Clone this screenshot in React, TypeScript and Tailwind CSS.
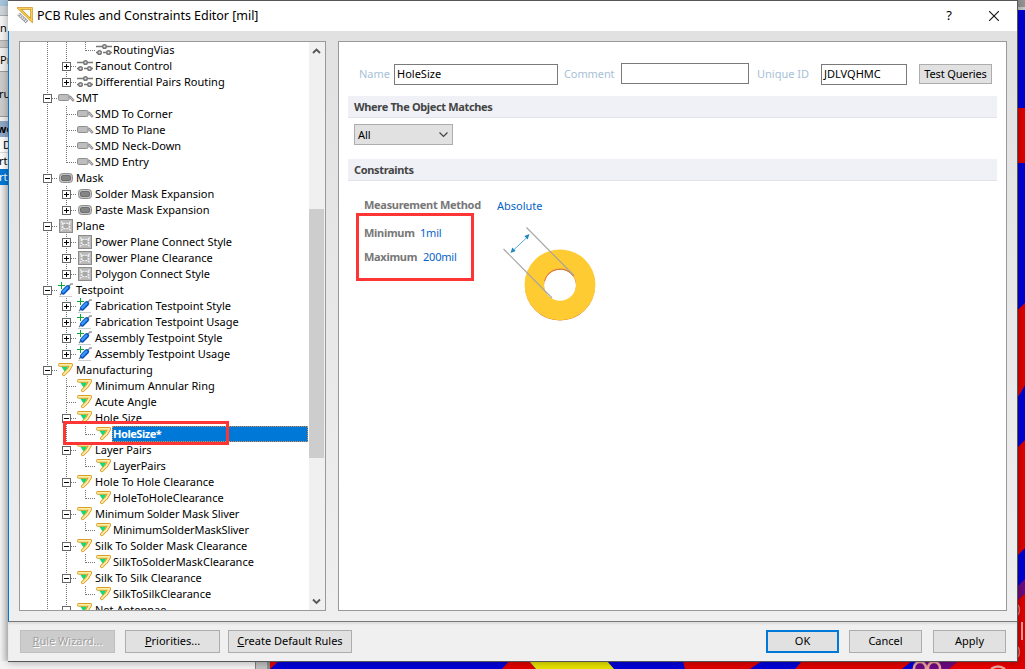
import React from 'react'
import clsx from 'clsx'

type IconName = 'routing' | 'smt' | 'mask' | 'plane' | 'testpoint' | 'manufacturing'

type TreeRow = {
    label: string
    level: number
    icon: IconName
    box?: '+' | '-'
    last?: boolean
    selected?: boolean
    tight?: boolean
}

const rows: TreeRow[] = [
    { label: 'RoutingVias', level: 2, icon: 'routing' },
    { label: 'Fanout Control', level: 1, icon: 'routing', box: '+' },
    { label: 'Differential Pairs Routing', level: 1, icon: 'routing', box: '+', last: true },
    { label: 'SMT', level: 0, icon: 'smt', box: '-' },
    { label: 'SMD To Corner', level: 1, icon: 'smt' },
    { label: 'SMD To Plane', level: 1, icon: 'smt' },
    { label: 'SMD Neck-Down', level: 1, icon: 'smt' },
    { label: 'SMD Entry', level: 1, icon: 'smt', last: true },
    { label: 'Mask', level: 0, icon: 'mask', box: '-' },
    { label: 'Solder Mask Expansion', level: 1, icon: 'mask', box: '+' },
    { label: 'Paste Mask Expansion', level: 1, icon: 'mask', box: '+', last: true },
    { label: 'Plane', level: 0, icon: 'plane', box: '-' },
    { label: 'Power Plane Connect Style', level: 1, icon: 'plane', box: '+' },
    { label: 'Power Plane Clearance', level: 1, icon: 'plane', box: '+' },
    { label: 'Polygon Connect Style', level: 1, icon: 'plane', box: '+', last: true },
    { label: 'Testpoint', level: 0, icon: 'testpoint', box: '-' },
    { label: 'Fabrication Testpoint Style', level: 1, icon: 'testpoint', box: '+' },
    { label: 'Fabrication Testpoint Usage', level: 1, icon: 'testpoint', box: '+' },
    { label: 'Assembly Testpoint Style', level: 1, icon: 'testpoint', box: '+' },
    { label: 'Assembly Testpoint Usage', level: 1, icon: 'testpoint', box: '+', last: true },
    { label: 'Manufacturing', level: 0, icon: 'manufacturing', box: '-' },
    { label: 'Minimum Annular Ring', level: 1, icon: 'manufacturing' },
    { label: 'Acute Angle', level: 1, icon: 'manufacturing' },
    { label: 'Hole Size', level: 1, icon: 'manufacturing', box: '-' },
    { label: 'HoleSize*', level: 2, icon: 'manufacturing', selected: true },
    { label: 'Layer Pairs', level: 1, icon: 'manufacturing', box: '-' },
    { label: 'LayerPairs', level: 2, icon: 'manufacturing', tight: true },
    { label: 'Hole To Hole Clearance', level: 1, icon: 'manufacturing', box: '-' },
    { label: 'HoleToHoleClearance', level: 2, icon: 'manufacturing' },
    { label: 'Minimum Solder Mask Sliver', level: 1, icon: 'manufacturing', box: '-', tight: true },
    { label: 'MinimumSolderMaskSliver', level: 2, icon: 'manufacturing', tight: true },
    { label: 'Silk To Solder Mask Clearance', level: 1, icon: 'manufacturing', box: '-' },
    { label: 'SilkToSolderMaskClearance', level: 2, icon: 'manufacturing' },
    { label: 'Silk To Silk Clearance', level: 1, icon: 'manufacturing', box: '-' },
    { label: 'SilkToSilkClearance', level: 2, icon: 'manufacturing' },
    { label: 'Net Antennae', level: 1, icon: 'manufacturing', box: '-' },
]

const TreeIcon = ({ name }: { name: IconName }) => (
    <svg width="19" height="16" viewBox="0 0 19 16" className="shrink-0">
        {name === 'routing' && (
            <g fill="none" stroke="#777" strokeWidth="1.3">
                <path d="M1 4.5h6M12 4.5h5M1 10.5h3M8 10.5h3M15 10.5h2" />
                <g fill="#ddd" strokeWidth="1.5">
                    <circle cx="9.5" cy="4.5" r="1.8" />
                    <circle cx="4.5" cy="10.5" r="1.8" />
                    <circle cx="13.5" cy="10.5" r="1.8" />
                </g>
            </g>
        )}
        {name === 'smt' && (
            <g>
                <path d="M11 7h2.200l3.500 4" fill="none" stroke="#8c8c8c" strokeWidth="2.6" />
                <path d="M11 7h2.200l3 3.500" fill="none" stroke="#c8c8c8" strokeWidth="1" />
                <rect x="1.5" y="4.5" width="10.5" height="6" rx="1.3" fill="#bdbdbd" stroke="#8f8f8f" />
            </g>
        )}
        {name === 'mask' && (
            <g>
                <rect x="2.5" y="3.5" width="13" height="9" rx="3" fill="#c3c3c3" stroke="#8f8f8f" />
                <rect x="4.5" y="5.5" width="9" height="5" rx="1.5" fill="#858585" stroke="#707070" />
            </g>
        )}
        {name === 'plane' && (
            <g>
                <rect x="2.5" y="1.5" width="13" height="13" fill="#b9b9b9" stroke="#8c8c8c" />
                <path d="M4 3.5l2.5 2h5l2.5-2M4 12.5l2.5-2h5l2.5 2M5.5 5v6M12.5 5v6" fill="none" stroke="#eee" strokeWidth="1.4" strokeDasharray="2 1" />
                <rect x="7" y="6" width="4" height="4" fill="#a8a8a8" />
            </g>
        )}
        {name === 'testpoint' && (
            <g>
                <path d="M2 14.5h13" stroke="#ccc" />
                <path d="M11.5 4.500l2.500-2.500h2" fill="none" stroke="#999" strokeWidth="1.6" />
                <path d="M3 13l3-3" stroke="#777" strokeWidth="1.2" />
                <path d="M6.3 10.200L10.800 5.500" stroke="#0b55c0" strokeWidth="4.8" strokeLinecap="round" />
                <path d="M6.300 9.700L10.300 5.500" stroke="#3c97fa" strokeWidth="2.4" strokeLinecap="round" />
                <path d="M1 3.5h7M4.5 0v7" stroke="#0ba538" shapeRendering="crispEdges" />
            </g>
        )}
        {name === 'manufacturing' && (
            <g strokeLinecap="round" strokeLinejoin="round">
                <path d="M4.200 4.500h7L8 10z" fill="#10dc72" />
                <path d="M2.900 2.900h11.400L11.300 8 6.800 12.300" fill="none" stroke="#d99c25" strokeWidth="3.600" />
                <path d="M2.900 2.900h11.400L11.300 8 6.800 12.300" fill="none" stroke="#ffefa8" strokeWidth="1.800" />
            </g>
        )}
    </svg>
)

// one 19px column of the tree: dotted guide lines plus the expand box
const Guide = ({ up, down, right, box }: { up?: boolean, down?: boolean, right?: boolean, box?: '+' | '-' }) => (
    <svg width="19" height="16" viewBox="0 0 19 16" shapeRendering="crispEdges" className="shrink-0">
        <g stroke="#777" strokeDasharray="1 1">
            {up && <path d="M9.5 0v9" />}
            {down && <path d="M9.5 8v8" />}
            {right && <path d="M10 8.5h9" />}
        </g>
        {box && (
            <g stroke="#666">
                <rect x="5.5" y="4.5" width="8" height="8" fill="#fff" />
                <path d="M7 8.5h5" stroke="#000" />
                {box === '+' && <path d="M9.5 6v5" stroke="#000" />}
            </g>
        )}
    </svg>
)

const Row = ({ row }: { row: TreeRow }) => (
    <div className="flex h-4 shrink-0 items-center pl-[18px]">
        <Guide up down right={row.level === 0} box={row.level === 0 ? row.box : undefined} />
        {row.level > 0 && <Guide up down={row.level === 2 || !row.last} right={row.level === 1} box={row.level === 1 ? row.box : undefined} />}
        {row.level > 1 && <Guide up right />}
        <TreeIcon name={row.icon} />
        {row.selected ? (
            <div className="-ml-[2px] flex h-4 flex-1 items-center border border-dotted border-[#e09040] bg-[#0078d7] font-bold leading-4 tracking-[-0.45px] text-white">
                {row.label}
            </div>
        ) : (
            <div className={clsx('whitespace-nowrap leading-4', row.level === 2 && '-ml-px', row.tight && 'tracking-[-0.1px]')}>{row.label}</div>
        )}
    </div>
)

const Button = ({ className, children }: { className: string, children: React.ReactNode }) => (
    <button className={clsx('flex h-[23px] items-center justify-center border whitespace-nowrap', className)}>
        <span>{children}</span>
    </button>
)

const SectionHeader = ({ title }: { title: string }) => (
    <div className="flex h-[22px] items-center border-b border-[#e2e3e8] bg-[#f0f1f6] pl-[6px] pt-[2px] font-bold tracking-[-0.35px] text-[#444]">
        {title}
    </div>
)

const Backdrop = () => (
    <svg width="1025" height="669" viewBox="0 0 1025 669" className="absolute inset-0">
        <rect width="1025" height="669" fill="#5a5a5a" />
        <rect y="661" width="255" height="8" fill="#f3f3f3" />
        <rect x="255" y="661" width="1" height="8" fill="#808080" />
        <rect x="256" y="661" width="11" height="8" fill="#c0c0c0" />
        <rect x="267" y="661" width="3" height="8" fill="#8c8c8c" />
        <rect x="270" y="661" width="755" height="8" fill="#0000d8" />
        <path d="M270 661h9l-9 8zM509 661h20l7 8h-34zM683 661h79l-12 8h-65zM802 661h110l-10 8h-107z" fill="#e00000" />
        <path d="M529 661h78l7 8h-78z" fill="#e6e200" />
        <path d="M921 661h39l-10 8h-39z" fill="#6e0a82" />
        <path d="M958 661h67v8h-76z" fill="#ee0000" />
        <rect x="1010" width="15" height="7" fill="#959595" />
        <rect x="1010" y="7" width="15" height="3" fill="#c8c8c8" />
        <rect x="1010" y="10" width="15" height="651" fill="#0000d8" />
        <path d="M1010 108h15v55h-15zM1010 317l15-14v82q-4 8-8 13h-7zM1010 455l15-15v108l-15 15zM1010 607l15-14v76h-15z" fill="#e00000" />
        <path d="M1010 594l15-15v14l-15 14z" fill="#6e0a82" />
        <rect x="1021" y="622" width="2" height="18" fill="#f2a0a0" />
        <g fill="none" stroke="#f0a49c" strokeWidth="2.5">
            <circle cx="920" cy="668" r="6" />
            <circle cx="934" cy="668" r="6" />
            <path d="M991 669q7-5 14 0" />
            <path d="M1018 605q3 5 0 10M1018 647q3 5 0 10" strokeWidth="1.5" opacity=".7" />
        </g>
    </svg>
)

// sliver of the panel that sits under the dialog on the left
const LeftStrip = () => (
    <div className="absolute left-0 top-0 flex h-[661px] w-2 flex-col overflow-hidden whitespace-nowrap bg-[#f1f1f1] text-[11px] leading-4">
        <div className="h-[6px] shrink-0 bg-[#a5c5dc]" />
        <div className="h-[10px] shrink-0 border-b border-[#aaa] bg-[#cfd6db]" />
        <div className="flex h-6 shrink-0 items-center bg-[#f4f4f4]">n</div>
        <div className="h-2 shrink-0 border-y border-[#aaa] bg-[#c8c8c8]" />
        <div className="flex h-6 shrink-0 items-center border-b border-[#999]">Pr</div>
        <div className="flex h-[45px] shrink-0 items-center border-b border-[#999] bg-[#ccc]"><span className="-ml-px">ru</span></div>
        <div className="h-1 shrink-0" />
        <div className="flex h-4 shrink-0 items-center bg-[#91a7c7] font-bold"><span className="-ml-[3px]">wo</span></div>
        <div className="flex h-4 shrink-0 items-center border-b border-[#ddd] bg-white pl-[3px]">D</div>
        <div className="flex h-4 shrink-0 items-center bg-white"><span className="-ml-px">rt:</span></div>
        <div className="flex h-4 shrink-0 items-center bg-[#0078d7] text-white"><span className="-ml-px">rt:</span></div>
        <div className="flex-1 bg-gradient-to-r from-[#f4f4f4] to-[#d2d2d2]" />
    </div>
)

const HoleDrawing = () => (
    <svg width="100" height="100" viewBox="500 225 100 100">
        <circle cx="560" cy="285.6" r="25.5" fill="none" stroke="#d9662f" strokeWidth="19" />
        <circle cx="560" cy="284.8" r="25.7" fill="none" stroke="#ffcb33" strokeWidth="19.4" />
        <path d="M544.700 281a16 16 0 0 1 28.500-5" fill="none" stroke="#d9662f" strokeWidth=".8" />
        <path d="M503.5 249l48.5 49M526.5 227.5l47.5 48" stroke="#a3a3a3" strokeWidth="1.1" />
        <path d="M513 250.5l15-14" stroke="#59a9d3" />
        <path d="M510.5 253l1.8-5.5 3.4 3.6zM529.5 234l-1.8 5.5-3.4-3.6z" fill="#2288bb" />
    </svg>
)

const App = () => {
    return (
        <div className="relative h-[669px] w-[1025px] overflow-hidden font-['Noto_Sans','Open_Sans',sans-serif] text-[11px] text-black">
            <Backdrop />
            <LeftStrip />

            <div className="absolute left-2 top-0 flex h-[662px] w-[1010px] flex-col border-b border-t border-r border-[#555] bg-white shadow-[0_0_8px_rgba(0,0,0,0.35)]">
                <div className="flex h-[30px] shrink-0 items-center">
                    <svg width="17" height="17" viewBox="0 0 17 17" className="ml-[9px] -mt-[2px]">
                        <path d="M2 1.500h12.500v12z" fill="#fff" stroke="#c98f12" strokeWidth="2.5" />
                        <path d="M2 1.500h12.500v12z" fill="none" stroke="#f7cf55" strokeWidth="1.2" />
                        <path d="M1.5 7l8.500 8" stroke="#8c8c8c" strokeWidth="3.600" />
                        <path d="M1.5 7l8.500 8" stroke="#e8e8e8" strokeWidth="2.200" strokeDasharray="1.5 .8" />
                    </svg>
                    <span className="ml-[3px] text-[12.5px] tracking-[-0.03px]">PCB Rules and Constraints Editor [mil]</span>
                    <span className="ml-auto mr-[37px] text-[13px]">?</span>
                    <svg width="10" height="10" viewBox="0 0 10 10" className="mr-[18px]">
                        <path d="M0 0l10 10M10 0L0 10" stroke="#111" strokeWidth="1.1" />
                    </svg>
                </div>

                <div className="flex h-[591px] shrink-0 gap-3 border-b border-l border-b-[#777] border-l-[#0078d7] bg-gradient-to-b from-[#e1e1e1] to-[#efefef] py-[10px] pl-[10px] pr-[10px]">
                    <div className="relative flex h-[570px] w-[307px] border border-[#999] bg-white">
                        <div className="flex h-[568px] flex-1 flex-col overflow-hidden pr-px">
                            {rows.map((row) => <Row key={row.label} row={row} />)}
                        </div>
                        <div className="flex w-4 flex-col items-center bg-[#f0f0f0] pr-px">
                            <svg width="15" height="17" viewBox="0 0 15 17" className="shrink-0">
                                <path d="M4 11l3.5-3.5 3.5 3.5" fill="none" stroke="#555" strokeWidth="1.800" />
                            </svg>
                            <div className="mt-[150px] h-[249px] w-full bg-[#cdcdcd]" />
                            <svg width="15" height="17" viewBox="0 0 15 17" className="mt-auto shrink-0">
                                <path d="M4 6.5l3.5 3.5 3.5-3.5" fill="none" stroke="#555" strokeWidth="1.800" />
                            </svg>
                        </div>
                        <div className="absolute left-[43px] top-[379px] h-6 w-[166px] border-[3px] border-[#fd3535]" />
                    </div>

                    <div className="relative flex h-[570px] w-[669px] flex-col border border-[#999] bg-white pl-[9px] pr-[9px] pt-[21px]">
                        <div className="flex h-[22px] items-start pl-[11px] text-[#a8bfd7]">
                            <span className="mt-[3px] w-[35px]">Name</span>
                            <div className="mt-px flex h-[21px] w-[164px] items-center border border-[#7a7a7a] pl-[2px] text-black">HoleSize</div>
                            <span className="ml-[6px] mt-[3px] w-[57px] tracking-[-0.1px]">Comment</span>
                            <div className="h-[21px] w-32 border border-[#7a7a7a]" />
                            <span className="ml-2 mt-[3px] w-16">Unique ID</span>
                            <div className="mt-px flex h-[21px] w-[86px] items-center border border-[#7a7a7a] pl-[2px] text-black">JDLVQHMC</div>
                            <Button className="ml-3 mt-px h-5! w-[73px] border-[#adadad] bg-[#e1e1e1] tracking-[-0.15px] text-black">Test Queries</Button>
                        </div>
                        <div className="mt-[11px]">
                            <SectionHeader title="Where The Object Matches" />
                        </div>
                        <div className="ml-[6px] mt-[6px] flex h-[21px] w-[99px] items-center justify-between border border-[#adadad] bg-[#e1e1e1] pl-[3px] pr-1">
                            <span className="mt-px">All</span>
                            <svg width="9" height="6" viewBox="0 0 9 6">
                                <path d="M.5.5l4 4 4-4" fill="none" stroke="#444" strokeWidth="1.2" />
                            </svg>
                        </div>
                        <div className="mt-[14px]">
                            <SectionHeader title="Constraints" />
                        </div>
                        <div className="mt-[17px] flex h-4 items-center pl-4">
                            <span className="-mt-[2px] w-[133px] whitespace-nowrap font-bold tracking-[-0.3px] text-[#777]">Measurement Method</span>
                            <span className="text-[#0563c9]">Absolute</span>
                        </div>
                        <div className="flex pl-4">
                            <div className="flex w-[136px] flex-col gap-2 pt-[11px]">
                                <div className="flex h-4 items-center">
                                    <span className="w-14 font-bold tracking-[-0.3px] text-[#777]">Minimum</span>
                                    <span className="mt-px tracking-[-0.2px] text-[#0563c9]">1mil</span>
                                </div>
                                <div className="flex h-4 items-center">
                                    <span className="w-[59px] font-bold tracking-[-0.3px] text-[#777]">Maximum</span>
                                    <span className="tracking-[-0.2px] text-[#0563c9]">200mil</span>
                                </div>
                            </div>
                            <div className="pt-[11px]">
                                <HoleDrawing />
                            </div>
                        </div>
                        <div className="absolute left-[17px] top-[171px] h-[68px] w-[118px] border-[3px] border-[#fd3535]" />
                    </div>
                </div>

                <div className="flex flex-1 items-start bg-[#f0f0f0] pl-3 pr-[11px] pt-2 shadow-[inset_0_2px_2px_rgba(0,0,0,0.08)]">
                    <Button className="w-[95px] border-[#bfbfbf] bg-[#ccc] text-[#a0a0a0] [text-shadow:1px_1px_0_#fff]"><u>R</u>ule Wizard...</Button>
                    <Button className="ml-[10px] w-[95px] border-[#adadad] bg-[#e1e1e1]"><u>P</u>riorities...</Button>
                    <Button className="ml-2 w-[124px] border-[#adadad] bg-[#e1e1e1]"><u>C</u>reate Default Rules</Button>
                    <Button className="ml-auto w-[73px] border-2 border-[#0078d7] bg-[#e1e1e1]">OK</Button>
                    <Button className="ml-[10px] w-[73px] border-[#adadad] bg-[#e1e1e1]">Cancel</Button>
                    <Button className="ml-[11px] w-[73px] border-[#adadad] bg-[#e1e1e1]">Apply</Button>
                </div>
            </div>
        </div>
    )
}

export default App
